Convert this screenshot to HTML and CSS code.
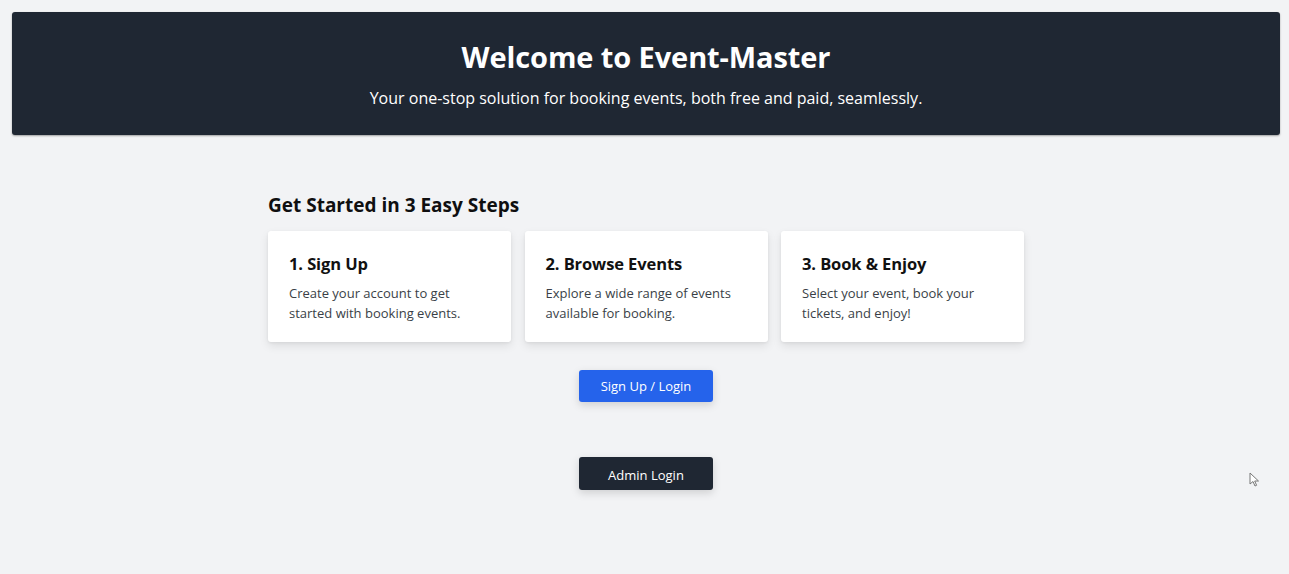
FILE: index.html
```html
<!DOCTYPE html>
<html lang="en">
<head>
<meta charset="utf-8">
<title>Event-Master</title>
<link rel="stylesheet" href="styles.css">
</head>
<body>
<header class="hero">
  <h1 class="hero-title">Welcome to Event-Master</h1>
  <p class="hero-sub">Your one-stop solution for booking events, both free and paid, seamlessly.</p>
</header>
<main class="steps">
  <h2 class="steps-title">Get Started in 3 Easy Steps</h2>
  <div class="cards">
    <div class="card">
      <h3 class="card-title">1. Sign Up</h3>
      <p class="card-text">Create your account to get started with booking events.</p>
    </div>
    <div class="card">
      <h3 class="card-title">2. Browse Events</h3>
      <p class="card-text">Explore a wide range of events available for booking.</p>
    </div>
    <div class="card">
      <h3 class="card-title">3. Book &amp; Enjoy</h3>
      <p class="card-text">Select your event, book your tickets, and enjoy!</p>
    </div>
  </div>
  <div class="actions">
    <button class="btn btn-primary">Sign Up / Login</button>
    <button class="btn btn-dark">Admin Login</button>
  </div>
</main>
<svg class="cursor" width="12" height="16" viewBox="0 0 12 16"><path d="M1 1 L1 12 L4 9.5 L6 14 L7.6 13.3 L5.7 9 L9.5 9 Z" fill="#fff" stroke="#777" stroke-width="1"/></svg>
</body>
</html>
```
FILE: styles.css
```css
* { box-sizing: border-box; }
html, body { margin: 0; padding: 0; }
body {
  background: #f2f3f5;
  font-family: "Open Sans", "Noto Sans", sans-serif;
  color: #111827;
  min-height: 574px;
  position: relative;
  overflow: hidden;
}
.hero {
  margin: 12px 9px 0 12px;
  height: 123px;
  background: #1f2733;
  border-radius: 3px;
  box-shadow: 0 1px 2px rgba(0,0,0,0.35);
  color: #fff;
  text-align: center;
  padding-top: 27px;
}
.hero-title {
  margin: 0;
  font-size: 29px;
  line-height: 36px;
  font-weight: 700;
  letter-spacing: -0.1px;
}
.hero-sub {
  margin: 11px 0 0;
  font-size: 16px;
  line-height: 24px;
}
.steps {
  width: 755px;
  margin: 56px auto 0;
  padding-left: 1px;
}
.steps-title {
  margin: 0;
  font-size: 19px;
  line-height: 28px;
  font-weight: 700;
  color: #0f0f10;
}
.cards {
  margin-top: 12px;
  display: grid;
  grid-template-columns: repeat(3, 243px);
  column-gap: 13.5px;
}
.card {
  background: #fff;
  border-radius: 3px;
  box-shadow: 0 4px 10px rgba(0,0,0,0.09), 0 1px 3px rgba(0,0,0,0.06);
  height: 111px;
  padding: 20px 21px 0;
}
.card-title {
  margin: 0;
  font-size: 16.5px;
  line-height: 26px;
  font-weight: 700;
  color: #111;
  letter-spacing: -0.1px;
}
.card-text {
  margin: 6px 0 0;
  font-size: 13px;
  line-height: 20px;
  color: #3a3f47;
}
.actions {
  display: flex;
  flex-direction: column;
  align-items: center;
  gap: 55px;
  margin-top: 28px;
  padding-left: 2px;
}
.btn {
  width: 134px;
  height: 32px;
  border: none;
  border-radius: 3px;
  color: #fff;
  font-family: inherit;
  font-size: 13px;
  box-shadow: 0 3px 8px rgba(0,0,0,0.15);
  padding: 0;
}
.btn-primary { background: #2563eb; }
.btn-dark { background: #1f2733; height: 33px; padding-top: 2px; }
.cursor {
  position: absolute;
  left: 1249px;
  top: 472px;
}
```
